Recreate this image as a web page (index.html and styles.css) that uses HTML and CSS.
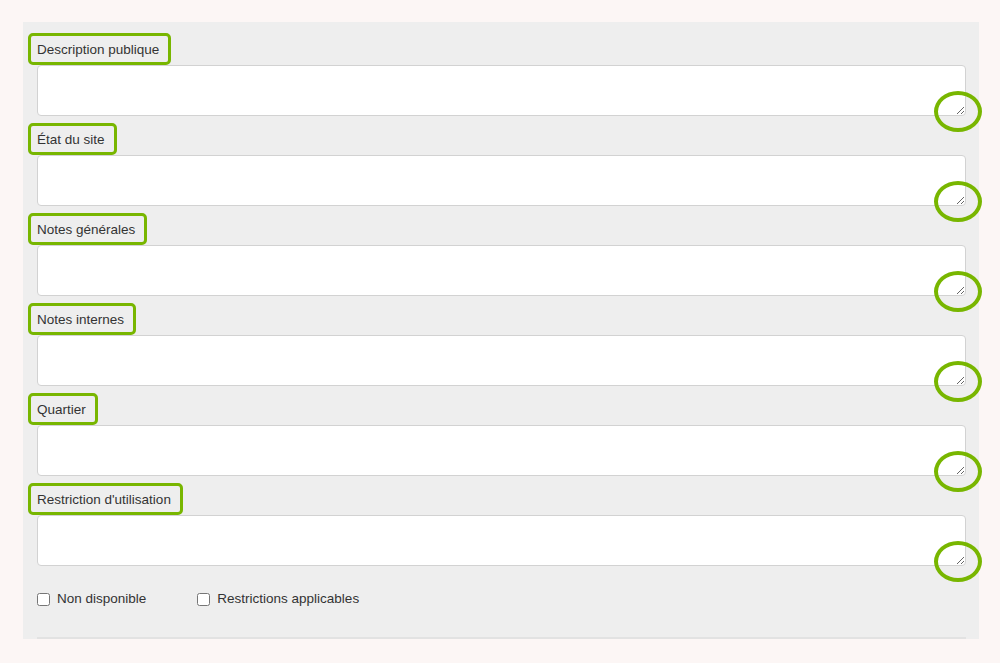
FILE: index.html
```html
<!DOCTYPE html>
<html lang="fr">
<head>
    <meta charset="UTF-8">
    <meta name="viewport" content="width=device-width, initial-scale=1.0">
    <title>Fiche du site</title>
    <link rel="stylesheet" href="styles.css">
</head>
<body>
    <div class="panel">
        <div class="field">
            <label class="label" for="description"><span class="mark">Description publique</span></label>
            <div class="box"><textarea id="description"></textarea><span class="ring"></span></div>
        </div>
        <div class="field">
            <label class="label" for="etat"><span class="mark">État du site</span></label>
            <div class="box"><textarea id="etat"></textarea><span class="ring"></span></div>
        </div>
        <div class="field">
            <label class="label" for="notes"><span class="mark">Notes générales</span></label>
            <div class="box"><textarea id="notes"></textarea><span class="ring"></span></div>
        </div>
        <div class="field">
            <label class="label" for="internes"><span class="mark">Notes internes</span></label>
            <div class="box"><textarea id="internes"></textarea><span class="ring"></span></div>
        </div>
        <div class="field">
            <label class="label" for="quartier"><span class="mark">Quartier</span></label>
            <div class="box"><textarea id="quartier"></textarea><span class="ring"></span></div>
        </div>
        <div class="field">
            <label class="label" for="restriction"><span class="mark">Restriction d'utilisation</span></label>
            <div class="box"><textarea id="restriction"></textarea><span class="ring"></span></div>
        </div>

        <div class="checks">
            <label class="check"><input type="checkbox" id="indisponible"> Non disponible</label>
            <label class="check"><input type="checkbox" id="restrictions"> Restrictions applicables</label>
        </div>

        <div class="rule"></div>
    </div>
</body>
</html>
```

FILE: styles.css
```css
body { margin: 0; background: #fcf6f5; font-family: "Liberation Sans", Arial, sans-serif; font-size: 13.5px; color: #333; }

.panel { margin: 22px 21px 0 23px; padding: 4px 13px 0 14px; background: #eeeeee; }

.field { display: flex; flex-direction: column; }
.label { display: block; height: 18px; line-height: 18px; margin: 15px 0 6px; }
.mark { position: relative; display: inline-block; }
.mark::before { content: ""; position: absolute; left: -9px; right: -12px; top: -8px; bottom: -6px; border: 3px solid #78b600; border-radius: 5px; pointer-events: none; }

.box { position: relative; }
.box textarea { display: block; width: 100%; height: 51px; box-sizing: border-box; margin: 0; padding: 6px 8px; border: 1px solid #d2d2d2; border-radius: 4px; background: #fff; font: inherit; }
.ring { position: absolute; right: -16px; bottom: -16px; width: 48px; height: 41px; box-sizing: border-box; border: 4px solid #78b600; border-radius: 50%; pointer-events: none; }

.checks { display: flex; gap: 51px; margin-top: 24px; height: 18px; line-height: 18px; }
.check { display: flex; align-items: center; gap: 7px; }
.check input { margin: 0; width: 13px; height: 13px; }

.rule { margin-top: 29px; border-top: 2px solid #e2e2e2; }
```
